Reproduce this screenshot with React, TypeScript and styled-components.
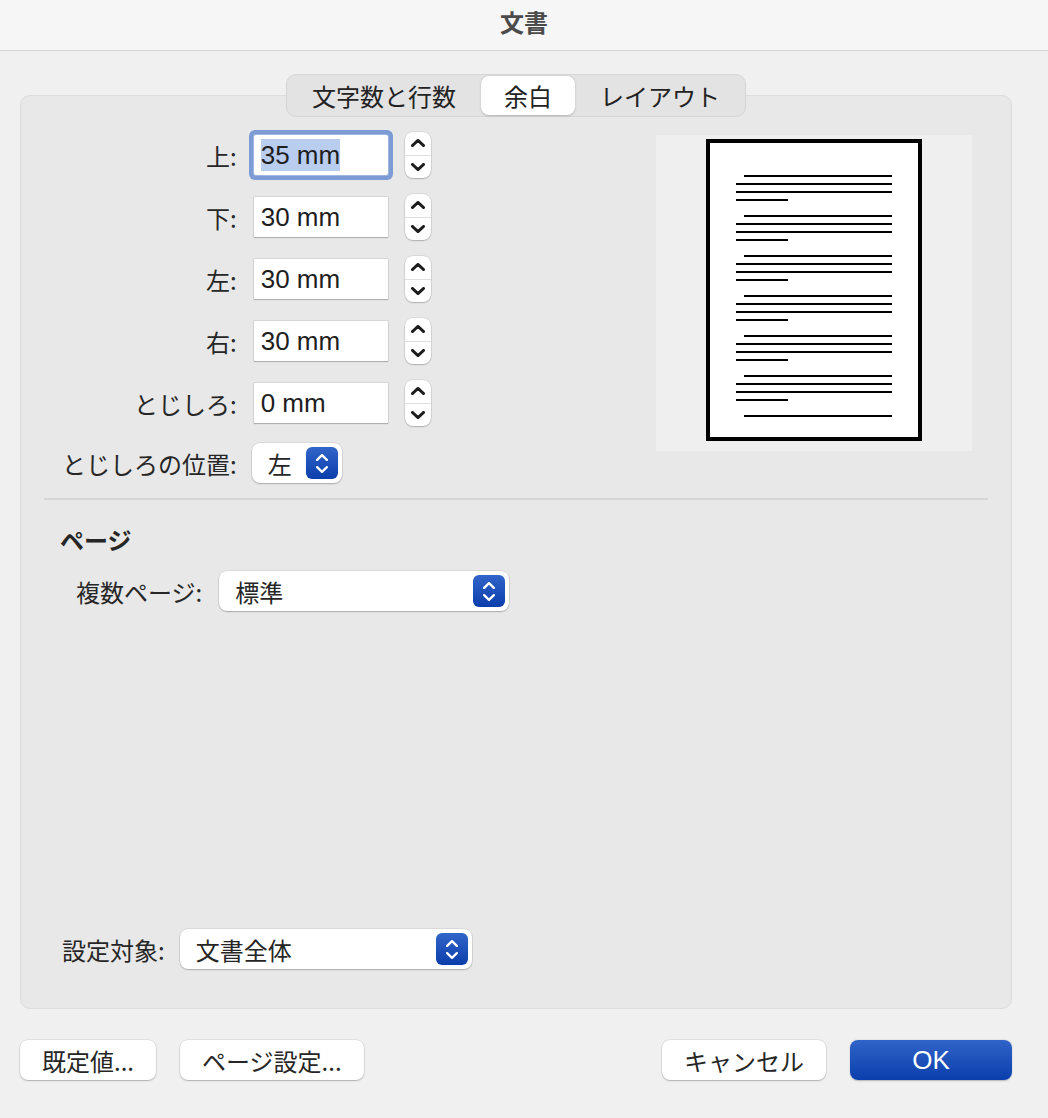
import React from "react";
import styled, { createGlobalStyle } from "styled-components";

const JP = `"Noto Sans CJK JP", "Liberation Sans", sans-serif`;
const LATIN = `"Liberation Sans", "Noto Sans CJK JP", sans-serif`;

const Global = createGlobalStyle`
  html, body { margin: 0; padding: 0; background: #f0f0f0; }
  body { font-family: ${JP}; color: #262626; }
  * { box-sizing: border-box; }
`;

const Window = styled.div`
  display: flex;
  flex-direction: column;
  min-height: 100vh;
  background: #f0f0f0;
`;

const TitleBar = styled.header`
  height: 51px;
  flex: none;
  display: flex;
  align-items: center;
  justify-content: center;
  padding-bottom: 8px;
  background: #f6f6f6;
  border-bottom: 1px solid #d4d4d4;
  font-size: 24px;
  font-weight: 700;
  color: #4b4b4b;
`;

const Body = styled.main`
  flex: 1;
  display: flex;
  flex-direction: column;
  padding: 0 36px 38px 20px;
`;

const Segmented = styled.div`
  align-self: center;
  position: relative;
  z-index: 1;
  display: flex;
  gap: 2px;
  padding: 1px 2px;
  height: 43px;
  margin: 23px 0 -22px;
  background: #e3e3e3;
  border: 1px solid #d6d6d6;
  border-radius: 10px;
`;

const Segment = styled.div<{ $active?: boolean }>`
  display: flex;
  align-items: center;
  padding: 0 23px;
  border-radius: 8px;
  font-size: 24px;
  color: #222;
  background: ${(p) => (p.$active ? "#fff" : "transparent")};
  box-shadow: ${(p) => (p.$active ? "0 0.5px 2px rgba(0,0,0,0.22)" : "none")};
`;

const Panel = styled.section`
  flex: 1;
  display: flex;
  flex-direction: column;
  background: #e8e8e8;
  border: 1px solid #dcdcdc;
  border-radius: 10px;
  padding: 39px 0 39px;
`;

const TopSection = styled.div`
  display: flex;
  justify-content: space-between;
  align-items: flex-start;
  padding: 0 39px 0 41px;
`;

const FormGrid = styled.div`
  display: grid;
  grid-template-columns: max-content max-content;
  grid-auto-rows: 40px;
  column-gap: 16px;
  row-gap: 22px;
  align-items: center;
`;

const Label = styled.div<{ $shift?: number }>`
  text-align: right;
  font-size: 24px;
  white-space: nowrap;
  color: #262626;
  margin-top: ${(p) => p.$shift ?? 0}px;
`;

const FieldCell = styled.div<{ $shift?: number; $left?: number }>`
  display: flex;
  align-items: center;
  gap: 17px;
  margin-top: ${(p) => p.$shift ?? 0}px;
  margin-left: ${(p) => p.$left ?? 1}px;
`;

const TextField = styled.div<{ $focused?: boolean }>`
  width: 134px;
  height: 40px;
  display: flex;
  align-items: center;
  padding-left: 7px;
  background: #fff;
  font-family: ${LATIN};
  font-size: 26px;
  color: #1e1e1e;
  border-radius: ${(p) => (p.$focused ? "2px" : "0")};
  box-shadow: ${(p) =>
    p.$focused
      ? "0 0 0 1px #9fb6e0, 0 0 0 5px #7d9bd4"
      : "0 0 0 0.5px rgba(0,0,0,0.14), 0 1px 1px rgba(0,0,0,0.18)"};
`;

const Selection = styled.span`
  background: #b9cdef;
  line-height: 32px;
`;

const StepperBox = styled.div`
  width: 26px;
  height: 46px;
  display: flex;
  flex-direction: column;
  background: #fff;
  border-radius: 8px;
  box-shadow: 0 0 0 0.5px rgba(0,0,0,0.12), 0 1px 1.5px rgba(0,0,0,0.2);
  overflow: hidden;
`;

const StepHalf = styled.div<{ $bottom?: boolean }>`
  flex: 1;
  display: flex;
  align-items: center;
  justify-content: center;
  border-top: ${(p) => (p.$bottom ? "1px solid #dedede" : "none")};
`;

const Popup = styled.div<{ $width: number }>`
  width: ${(p) => p.$width}px;
  height: 40px;
  display: flex;
  align-items: center;
  justify-content: space-between;
  padding: 0 4px 0 16px;
  background: #fff;
  border-radius: 8px;
  box-shadow: 0 0 0 0.5px rgba(0,0,0,0.12), 0 1px 1.5px rgba(0,0,0,0.22);
  font-size: 24px;
  color: #262626;
`;

const ArrowButton = styled.div`
  width: 32px;
  height: 32px;
  display: flex;
  flex-direction: column;
  align-items: center;
  justify-content: center;
  gap: 5px;
  border-radius: 6px;
  background: linear-gradient(#3265c9, #0b3eab);
`;

const PreviewBox = styled.div`
  width: 316px;
  height: 316px;
  background: #efefef;
  flex: none;
`;

const Separator = styled.hr`
  height: 2px;
  border: 0;
  margin: 13px 23px 0;
  background: #d5d5d5;
`;

const Heading = styled.h2`
  margin: 25px 0 0 39px;
  font-size: 24px;
  line-height: 29px;
  font-weight: 700;
  color: #262626;
`;

const Row = styled.div<{ $indent: number; $gap: number; $top?: number }>`
  display: flex;
  align-items: center;
  gap: ${(p) => p.$gap}px;
  padding-left: ${(p) => p.$indent}px;
  margin-top: ${(p) => p.$top ?? 0}px;
`;

const Spacer = styled.div`
  flex: 1;
`;

const Footer = styled.footer`
  display: flex;
  align-items: center;
  gap: 24px;
  margin-top: 31px;
  height: 40px;
`;

const Button = styled.button<{ $primary?: boolean; $min?: number }>`
  height: 40px;
  min-width: ${(p) => p.$min ?? 0}px;
  padding: 0 22px;
  border: 0;
  border-radius: 8px;
  font-family: ${(p) => (p.$primary ? LATIN : JP)};
  font-size: ${(p) => (p.$primary ? 26 : 24)}px;
  color: ${(p) => (p.$primary ? "#fff" : "#262626")};
  background: ${(p) => (p.$primary ? "linear-gradient(#3164c8, #0a3eac)" : "#fff")};
  box-shadow: ${(p) =>
    p.$primary
      ? "0 0.5px 1.5px rgba(0,0,0,0.25)"
      : "0 0 0 0.5px rgba(0,0,0,0.12), 0 1px 1.5px rgba(0,0,0,0.22)"};
`;

type ChevProps = { up?: boolean; w: number; h: number; sw: number; color: string };
const Chevron = ({ up, w, h, sw, color }: ChevProps) => {
  const a = sw / 2;
  const pts = up
    ? `${a},${h - a} ${w / 2},${a} ${w - a},${h - a}`
    : `${a},${a} ${w / 2},${h - a} ${w - a},${a}`;
  return (
    <svg width={w} height={h} viewBox={`0 0 ${w} ${h}`}>
      <polyline points={pts} fill="none" stroke={color} strokeWidth={sw} strokeLinecap="round" strokeLinejoin="round" />
    </svg>
  );
};

const Stepper = () => (
  <StepperBox>
    <StepHalf>
      <Chevron up w={14} h={8} sw={2.8} color="#1c1c1c" />
    </StepHalf>
    <StepHalf $bottom>
      <Chevron w={14} h={8} sw={2.8} color="#1c1c1c" />
    </StepHalf>
  </StepperBox>
);

const PopupArrows = () => (
  <ArrowButton>
    <Chevron up w={12} h={7} sw={2.3} color="#fff" />
    <Chevron w={12} h={7} sw={2.3} color="#fff" />
  </ArrowButton>
);

const PagePreview = () => {
  const groups = [40, 80, 120, 160, 200, 240];
  return (
    <PreviewBox>
      <svg width="316" height="316" viewBox="0 0 316 316">
        <rect x="52" y="6" width="212" height="298" fill="#fff" stroke="#000" strokeWidth="4" />
        {groups.map((y) => (
          <g key={y} fill="#000">
            <rect x="88" y={y} width="148" height="2" />
            <rect x="80" y={y + 8} width="156" height="2" />
            <rect x="80" y={y + 16} width="156" height="2" />
            <rect x="80" y={y + 24} width="52" height="2" />
          </g>
        ))}
        <rect x="88" y="280" width="148" height="2" fill="#000" />
      </svg>
    </PreviewBox>
  );
};

const margins = [
  { label: "上:", value: "35 mm", focused: true },
  { label: "下:", value: "30 mm" },
  { label: "左:", value: "30 mm" },
  { label: "右:", value: "30 mm" },
  { label: "とじしろ:", value: "0 mm" },
];

export default function App() {
  return (
    <>
      <Global />
      <Window>
        <TitleBar>文書</TitleBar>
        <Body>
          <Segmented>
            <Segment>文字数と行数</Segment>
            <Segment $active>余白</Segment>
            <Segment>レイアウト</Segment>
          </Segmented>
          <Panel>
            <TopSection>
              <FormGrid>
                {margins.map((m) => (
                  <React.Fragment key={m.label}>
                    <Label>{m.label}</Label>
                    <FieldCell>
                      <TextField $focused={m.focused}>
                        {m.focused ? <Selection>{m.value}</Selection> : m.value}
                      </TextField>
                      <Stepper />
                    </FieldCell>
                  </React.Fragment>
                ))}
                <Label $shift={-4}>とじしろの位置:</Label>
                <FieldCell $shift={-4} $left={-1}>
                  <Popup $width={90}>
                    左
                    <PopupArrows />
                  </Popup>
                </FieldCell>
              </FormGrid>
              <PagePreview />
            </TopSection>
            <Separator />
            <Heading>ページ</Heading>
            <Row $indent={55} $gap={17} $top={17}>
              <Label>複数ページ:</Label>
              <Popup $width={290}>
                標準
                <PopupArrows />
              </Popup>
            </Row>
            <Spacer />
            <Row $indent={41} $gap={15}>
              <Label>設定対象:</Label>
              <Popup $width={292}>
                文書全体
                <PopupArrows />
              </Popup>
            </Row>
          </Panel>
          <Footer>
            <Button>既定値...</Button>
            <Button>ページ設定...</Button>
            <Spacer />
            <Button $min={162}>キャンセル</Button>
            <Button $primary $min={162}>OK</Button>
          </Footer>
        </Body>
      </Window>
    </>
  );
}
